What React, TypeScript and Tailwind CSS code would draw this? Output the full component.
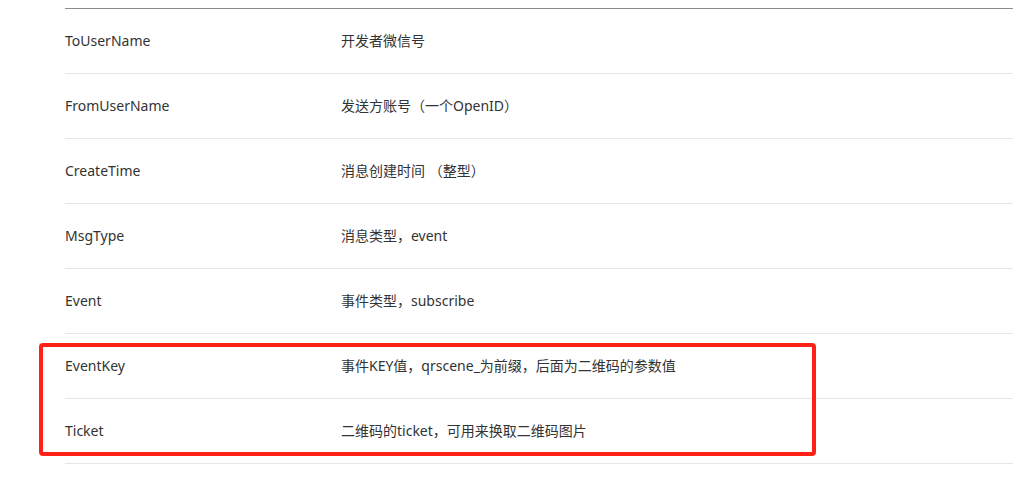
const rows = [
  { name: "ToUserName", desc: "开发者微信号" },
  { name: "FromUserName", desc: "发送方账号（一个OpenID）" },
  { name: "CreateTime", desc: "消息创建时间 （整型）" },
  { name: "MsgType", desc: "消息类型，event" },
  { name: "Event", desc: "事件类型，subscribe" },
  { name: "EventKey", desc: "事件KEY值，qrscene_为前缀，后面为二维码的参数值" },
  { name: "Ticket", desc: "二维码的ticket，可用来换取二维码图片" },
];

const App = () => {
  return (
    <div
      className="relative w-[1013px] h-[484px] bg-white text-[#333] text-[14px]"
      style={{ fontFamily: '"Noto Sans", "Noto Sans CJK SC", sans-serif' }}
    >
      <div className="pt-[8px] pl-[65px]">
        <div className="border-t border-[#8c8c8c]">
          {rows.map((row) => (
            <div
              key={row.name}
              className="flex items-center h-[65px] pb-[2px] border-b border-[#e6e6e6]"
            >
              <div className="w-[276px] shrink-0">{row.name}</div>
              <div>{row.desc}</div>
            </div>
          ))}
        </div>
      </div>
      <div className="absolute left-[39px] top-[343px] w-[777px] h-[113px] border-4 border-[#ff2116] rounded-[4px]" />
    </div>
  );
};

export default App;
